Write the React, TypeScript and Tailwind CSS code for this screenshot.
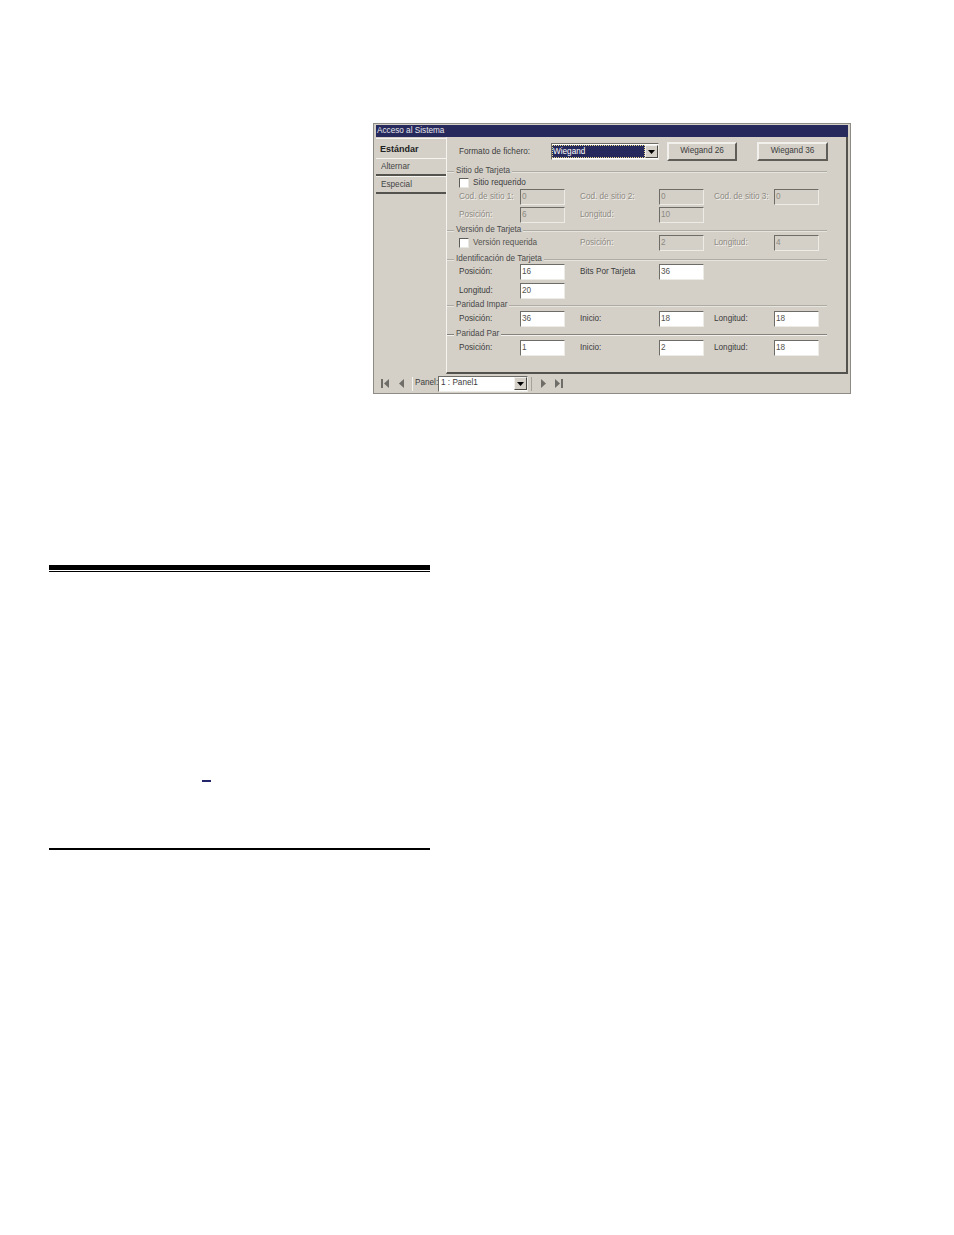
import React from "react";

const labelFont = "font-['Liberation_Sans',Arial,sans-serif] text-[8.2px] leading-none whitespace-nowrap";

function Label({ text, w, off }: { text: string; w: number; off?: boolean }) {
  return (
    <span
      style={{ width: w }}
      className={`${labelFont} shrink-0 ${off ? "text-[#8d8a82] [text-shadow:1px_1px_0_#f4f2ee]" : "text-[#3c3c3c]"}`}
    >
      {text}
    </span>
  );
}

function Field({ value, off }: { value: string; off?: boolean }) {
  return (
    <div
      className={`w-[45px] h-[16px] shrink-0 flex items-center pl-[1px] border-[1.5px] border-t-[#6e6c66] border-l-[#6e6c66] border-r-[#ecebe6] border-b-[#ecebe6] ${labelFont} ${
        off ? "bg-[#d4d0c8] text-[#8d8a82]" : "bg-white text-[#55534e]"
      }`}
    >
      {value}
    </div>
  );
}

function Check({ text, w, off }: { text: string; w: number; off?: boolean }) {
  return (
    <div style={{ width: w }} className="flex items-center shrink-0">
      <span className="w-[10px] h-[10px] bg-white border border-t-[#5f5d58] border-l-[#5f5d58] border-r-[#e8e6e0] border-b-[#e8e6e0] mr-[4px]" />
      <span className={`${labelFont} ${off ? "text-[#55534e]" : "text-[#3c3c3c]"}`}>{text}</span>
    </div>
  );
}

function Group({ text, strong }: { text: string; strong?: boolean }) {
  const line = strong ? "border-t border-[#85827b] border-b border-b-[#f2f1ed]" : "border-t border-[#aeaba3] border-b border-b-[#e6e4df]";
  return (
    <div className="flex items-center h-[9px] pr-[19px]">
      <span className={`w-[7px] h-[2px] ${line}`} />
      <span className={`${labelFont} text-[#4a4a4a] px-[2px]`}>{text}</span>
      <span className={`flex-1 h-[2px] ${line}`} />
    </div>
  );
}

function Row({ children, h, mt }: { children: React.ReactNode; h: number; mt: number }) {
  return (
    <div style={{ height: h, marginTop: mt }} className="flex items-center pl-[12px]">
      {children}
    </div>
  );
}

function Tab({ text, active }: { text: string; active?: boolean }) {
  return (
    <div
      className={`w-[70px] flex items-center pt-[1px] ${labelFont} ${
        active
          ? "h-[20px] pl-[4px] font-bold text-[9px] text-[#222] border-t border-[#f4f3ef]"
          : "h-[18px] pl-[5px] text-[#444] border-t border-[#f4f3ef] border-b-2 border-b-[#55534e]"
      }`}
    >
      {text}
    </div>
  );
}

function RaisedButton({ text, w, mr }: { text: string; w: number; mr: number }) {
  return (
    <div
      style={{ width: w, marginRight: mr }}
      className={`h-[19px] flex items-center justify-center bg-[#d4d0c8] border-2 border-t-[#f1f0ec] border-l-[#f1f0ec] border-r-[#5f5d58] border-b-[#5f5d58] ${labelFont} text-[#3c3c3c]`}
    >
      {text}
    </div>
  );
}

function NavIcon({ dir, bar }: { dir: "left" | "right"; bar?: boolean }) {
  return (
    <svg width="9" height="11" viewBox="0 0 9 11" className="shrink-0">
      {dir === "left" ? (
        <>
          {bar && <rect x="0" y="1" width="2" height="9" fill="#6f6d67" />}
          <path d="M8 1 L3 5.5 L8 10 Z" fill="#6f6d67" />
        </>
      ) : (
        <>
          <path d="M1 1 L6 5.5 L1 10 Z" fill="#6f6d67" />
          {bar && <rect x="7" y="1" width="2" height="9" fill="#6f6d67" />}
        </>
      )}
    </svg>
  );
}

function DropArrow() {
  return (
    <div className="w-[13px] h-[13px] shrink-0 flex items-center justify-center bg-[#d4d0c8] border border-t-[#f1f0ec] border-l-[#f1f0ec] border-r-[#4a4843] border-b-[#4a4843]">
      <svg width="7" height="4" viewBox="0 0 7 4">
        <path d="M0 0 H7 L3.5 4 Z" fill="#000" />
      </svg>
    </div>
  );
}

export default function App() {
  return (
    <div className="w-[954px] h-[1235px] bg-white overflow-hidden pt-[123px]">
      {/* screenshot pasted in the manual page */}
      <div className="ml-[373px] w-[478px] h-[271px] bg-[#d4d0c8] border-[1px] border-[#8d8b85] flex flex-col px-[2px] pt-[1px]">
        <div className={`h-[12px] bg-[#25295c] shrink-0 flex items-center pl-[1px] ${labelFont} text-[#e8e8ee]`}>
          Acceso al Sistema
        </div>

        <div className="flex h-[237px] shrink-0">
          <div className="w-[70px] shrink-0 pt-[1px] flex flex-col">
            <Tab text="Estándar" active />
            <Tab text="Alternar" />
            <Tab text="Especial" />
          </div>

          <div className="flex-1 border-l border-l-[#f4f3ef] border-r-2 border-r-[#55534e] border-b-2 border-b-[#55534e]">
            <div className="h-[19px] mt-[5px] flex items-center pl-[12px]">
              <span className={`${labelFont} text-[#3c3c3c] w-[92px] shrink-0 pt-[2px]`}>Formato de fichero:</span>
              <div className="w-[108px] h-[17px] mr-[8px] bg-white border border-t-[#6e6c66] border-l-[#6e6c66] border-r-[#ecebe6] border-b-[#ecebe6] flex items-center">
                <div className={`flex-1 h-[13px] bg-[#25295c] border border-dotted border-[#e8d98a] flex items-center pt-[1px] ${labelFont} text-white`}>
                  Wiegand
                </div>
                <DropArrow />
              </div>
              <RaisedButton text="Wiegand 26" w={70} mr={20} />
              <RaisedButton text="Wiegand 36" w={71} mr={0} />
            </div>

            <div className="mt-[6px]"><Group text="Sitio de Tarjeta" /></div>
            <Row h={10} mt={2}><Check text="Sitio requerido" w={120} /></Row>
            <Row h={16} mt={1}>
              <Label text="Cod. de sitio 1:" w={61} off />
              <Field value="0" off />
              <span className="w-[15px] shrink-0" />
              <Label text="Cod. de sitio 2:" w={79} off />
              <Field value="0" off />
              <span className="w-[10px] shrink-0" />
              <Label text="Cod. de sitio 3:" w={60} off />
              <Field value="0" off />
            </Row>
            <Row h={16} mt={2}>
              <Label text="Posición:" w={61} off />
              <Field value="6" off />
              <span className="w-[15px] shrink-0" />
              <Label text="Longitud:" w={79} off />
              <Field value="10" off />
            </Row>

            <div className="mt-[3px]"><Group text="Versión de Tarjeta" /></div>
            <Row h={16} mt={0}>
              <Check text="Versión requerida" w={121} off />
              <Label text="Posición:" w={79} off />
              <Field value="2" off />
              <span className="w-[10px] shrink-0" />
              <Label text="Longitud:" w={60} off />
              <Field value="4" off />
            </Row>

            <div className="mt-[4px]"><Group text="Identificación de Tarjeta" /></div>
            <Row h={16} mt={0}>
              <Label text="Posición:" w={61} />
              <Field value="16" />
              <span className="w-[15px] shrink-0" />
              <Label text="Bits Por Tarjeta" w={79} />
              <Field value="36" />
            </Row>
            <Row h={16} mt={3}>
              <Label text="Longitud:" w={61} />
              <Field value="20" />
            </Row>

            <div className="mt-[2px]"><Group text="Paridad Impar" /></div>
            <Row h={16} mt={1}>
              <Label text="Posición:" w={61} />
              <Field value="36" />
              <span className="w-[15px] shrink-0" />
              <Label text="Inicio:" w={79} />
              <Field value="18" />
              <span className="w-[10px] shrink-0" />
              <Label text="Longitud:" w={60} />
              <Field value="18" />
            </Row>

            <div className="mt-[3px]"><Group text="Paridad Par" strong /></div>
            <Row h={16} mt={1}>
              <Label text="Posición:" w={61} />
              <Field value="1" />
              <span className="w-[15px] shrink-0" />
              <Label text="Inicio:" w={79} />
              <Field value="2" />
              <span className="w-[10px] shrink-0" />
              <Label text="Longitud:" w={60} />
              <Field value="18" />
            </Row>
          </div>
        </div>

        <div className="flex-1 flex items-center pl-[5px]">
          <NavIcon dir="left" bar />
          <span className="w-[6px] shrink-0" />
          <NavIcon dir="left" />
          <span className="ml-[7px] w-[1px] h-[14px] bg-[#85827b] border-r border-r-[#f4f3ef] shrink-0" />
          <span className={`${labelFont} text-[#3c3c3c] ml-[2px] w-[23px] shrink-0`}>Panel:</span>
          <div className="w-[90px] h-[16px] shrink-0 bg-white border border-t-[#6e6c66] border-l-[#6e6c66] border-r-[#ecebe6] border-b-[#ecebe6] flex items-center justify-between pl-[2px]">
            <span className={`${labelFont} text-[#3c3c3c]`}>1 : Panel1</span>
            <DropArrow />
          </div>
          <span className="ml-[3px] w-[1px] h-[14px] bg-[#a5a29a] shrink-0" />
          <span className="w-[8px] shrink-0" />
          <NavIcon dir="right" />
          <span className="w-[5px] shrink-0" />
          <NavIcon dir="right" bar />
        </div>
      </div>

      {/* rules and link of the page text column */}
      <div className="ml-[49px] w-[381px] mt-[171px]">
        <div className="h-[5px] bg-black" />
        <div className="h-[1px] mt-[1px] bg-black" />
        <div className="h-[2px] w-[9px] ml-[153px] mt-[208px] bg-[#25256b]" />
        <div className="h-[2px] mt-[66px] bg-black" />
      </div>
    </div>
  );
}
